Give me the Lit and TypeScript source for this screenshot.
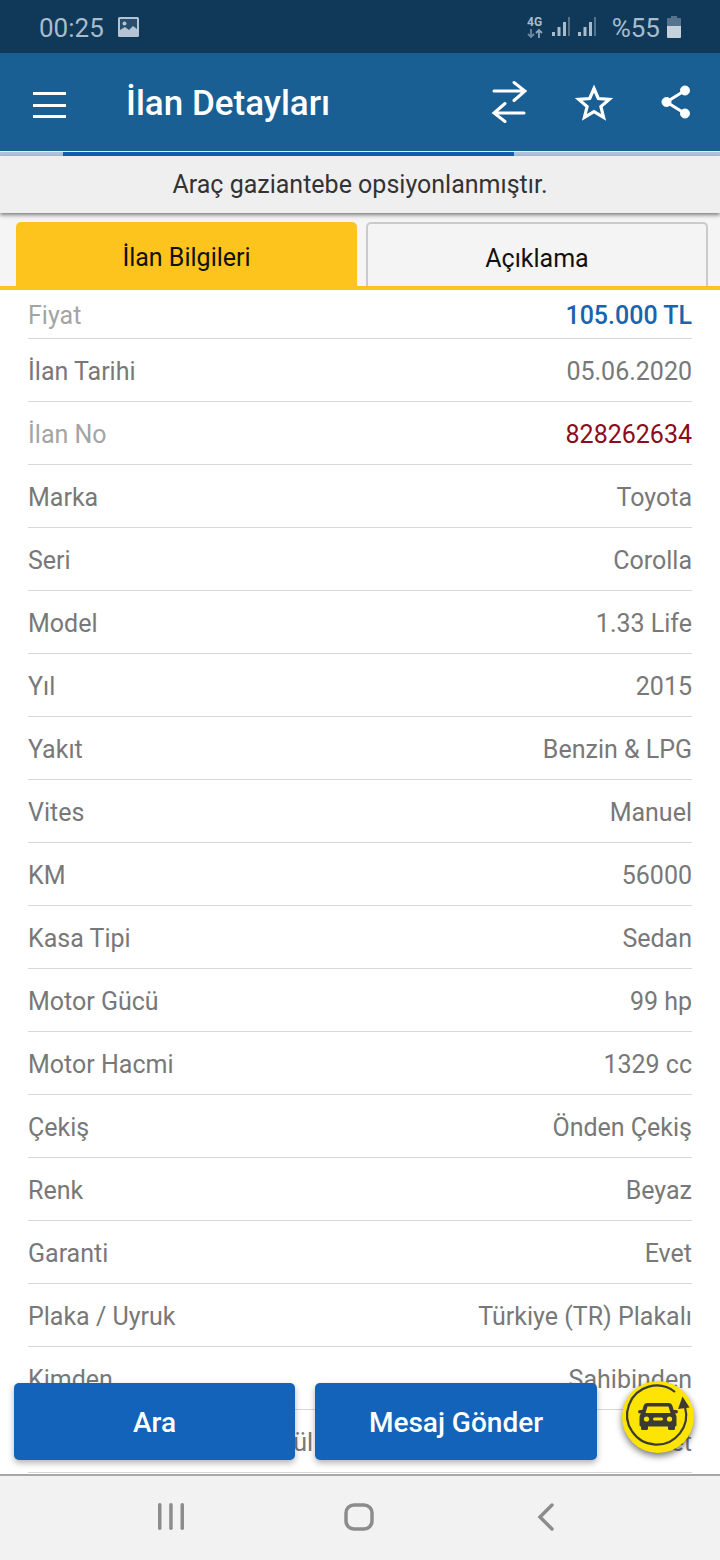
import { LitElement, css, html } from 'lit';
import { customElement } from 'lit/decorators.js';
import { classMap } from 'lit/directives/class-map.js';

interface Row {
  label: string;
  value: string;
  labelKind?: 'muted';
  valueKind?: 'price' | 'code';
}

const ROWS: Row[] = [
  { label: 'İlan Tarihi', value: '05.06.2020' },
  { label: 'İlan No', value: '828262634', labelKind: 'muted', valueKind: 'code' },
  { label: 'Marka', value: 'Toyota' },
  { label: 'Seri', value: 'Corolla' },
  { label: 'Model', value: '1.33 Life' },
  { label: 'Yıl', value: '2015' },
  { label: 'Yakıt', value: 'Benzin & LPG' },
  { label: 'Vites', value: 'Manuel' },
  { label: 'KM', value: '56000' },
  { label: 'Kasa Tipi', value: 'Sedan' },
  { label: 'Motor Gücü', value: '99 hp' },
  { label: 'Motor Hacmi', value: '1329 cc' },
  { label: 'Çekiş', value: 'Önden Çekiş' },
  { label: 'Renk', value: 'Beyaz' },
  { label: 'Garanti', value: 'Evet' },
  { label: 'Plaka / Uyruk', value: 'Türkiye (TR) Plakalı' },
  { label: 'Kimden', value: 'Sahibinden' },
  { label: 'Takas Uygun Olarak Görül', value: 'Evet' },
];

@customElement('app-root')
export class AppRoot extends LitElement {
  static override styles = css`
    :host {
      display: flex;
      flex-direction: column;
      position: relative;
      width: 720px;
      height: 1560px;
      overflow: hidden;
      background: #fff;
      font-family: Roboto, 'Liberation Sans', sans-serif;
    }
    .status {
      flex: none;
      height: 53px;
      box-sizing: border-box;
      padding: 0 39px 0 39px;
      background: #0f3859;
      color: #a9bccb;
      display: flex;
      align-items: center;
      font-size: 26px;
    }
    .status .time,
    .status .pct {
      padding-top: 2px;
    }
    .status .pic {
      margin-left: 14px;
    }
    .status .right {
      margin-left: auto;
      display: flex;
      align-items: center;
    }
    .status .bars {
      margin-left: 9px;
    }
    .status .bars + .bars {
      margin-left: 8px;
    }
    .status .pct {
      margin-left: 16px;
      margin-right: 7px;
    }
    .appbar {
      flex: none;
      height: 98px;
      box-sizing: border-box;
      padding: 0 29px 0 33px;
      background: #1a5f94;
      display: flex;
      align-items: center;
      color: #fff;
    }
    .appbar .menu {
      margin-top: 6px;
    }
    .appbar h1 {
      margin: 0 0 0 59px;
      padding-top: 2px;
      font-size: 35px;
      font-weight: 500;
      line-height: 1;
    }
    .appbar .actions {
      margin-left: auto;
      display: flex;
      align-items: center;
      gap: 48px;
    }
    .progress {
      flex: none;
      height: 5px;
      box-sizing: border-box;
      border-top: 1px solid #e4ebf2;
      background: #b0c3da;
      padding: 0 206px 0 63px;
    }
    .progress div {
      height: 100%;
      background: #1560ae;
    }
    .notice {
      flex: none;
      position: relative;
      z-index: 1;
      height: 57px;
      background: #efefef;
      box-shadow: 0 2px 4px rgba(0, 0, 0, 0.5);
      display: flex;
      align-items: center;
      justify-content: center;
      color: #333;
      font-size: 25px;
    }
    .tabs {
      flex: none;
      height: 77px;
      box-sizing: border-box;
      padding: 9px 0 0 16px;
      background: #f5f5f5;
      border-bottom: 4px solid #fdc41e;
      display: grid;
      grid-template-columns: 341px 342px;
      column-gap: 9px;
    }
    .tab {
      height: 64px;
      box-sizing: border-box;
      border-radius: 5px 5px 0 0;
      display: flex;
      align-items: center;
      justify-content: center;
      padding-top: 6px;
      color: #111;
      font-size: 25px;
    }
    .tab.on {
      background: #fdc41e;
    }
    .tab.off {
      background: #f4f4f4;
      border: 2px solid #cacaca;
      border-bottom: none;
    }
    .list {
      flex: 1;
      min-height: 0;
      overflow: hidden;
      padding: 0 28px 0 28px;
      font-size: 25px;
      color: #787878;
    }
    .row {
      height: 63px;
      box-sizing: border-box;
      padding-top: 2px;
      border-bottom: 1px solid #d8d8d8;
      display: flex;
      align-items: center;
      justify-content: space-between;
      white-space: nowrap;
    }
    .row.first {
      height: 49px;
    }
    .muted {
      color: #a4a4a4;
    }
    .price {
      color: #1a63ad;
      font-weight: 500;
    }
    .code {
      color: #8a0d1c;
    }
    .nav {
      flex: none;
      height: 86px;
      box-sizing: border-box;
      border-top: 2px solid #a8a8a8;
      background: #f2f2f2;
      display: flex;
      align-items: center;
      padding: 0 165px 3px 158px;
      justify-content: space-between;
    }
    .nav .home {
      margin-right: 4px;
    }
    .cta {
      position: absolute;
      top: 1383px;
      height: 77px;
      box-sizing: border-box;
      padding-top: 2px;
      border-radius: 5px;
      background: #1263b9;
      color: #fff;
      font-size: 28px;
      font-weight: 500;
      display: flex;
      align-items: center;
      justify-content: center;
      box-shadow: 0 3px 6px rgba(0, 0, 0, 0.3);
    }
    .call {
      left: 14px;
      width: 281px;
    }
    .message {
      left: 315px;
      width: 282px;
    }
    .fab {
      position: absolute;
      left: 622px;
      top: 1381px;
      width: 72px;
      height: 72px;
      border-radius: 50%;
      background: #fde402;
      box-shadow: 0 3px 7px rgba(0, 0, 0, 0.55);
    }
    svg {
      display: block;
      flex: none;
    }
  `;

  private renderRow(row: Row, first = false) {
    return html`
      <div class=${classMap({ row: true, first })}>
        <span class=${classMap({ muted: row.labelKind === 'muted' })}>${row.label}</span>
        <span
          class=${classMap({
            price: row.valueKind === 'price',
            code: row.valueKind === 'code',
          })}
          >${row.value}</span
        >
      </div>
    `;
  }

  private renderBars() {
    return html`
      <svg class="bars" width="18" height="21" viewBox="0 0 18 21" fill="#a9bccb">
        <rect x="0" y="16" width="3" height="4" />
        <rect x="5.500" y="11" width="3" height="9" />
        <rect x="11" y="6" width="3" height="14" />
        <rect x="16" y="1" width="2" height="19" fill="#54728c" />
      </svg>
    `;
  }

  override render() {
    return html`
      <div class="status">
        <span class="time">00:25</span>
        <svg class="pic" width="21" height="20" viewBox="0 0 21 20">
          <rect width="21" height="20" rx="1.500" fill="#b4c4d2" />
          <rect x="2" y="2" width="17" height="16" fill="#2a4f6e" />
          <path d="M2 18v-5l5-3 4 3 4-4 4 3v6z" fill="#b4c4d2" />
          <circle cx="6.500" cy="6.500" r="2" fill="#b4c4d2" />
        </svg>
        <div class="right">
          <svg width="16" height="24" viewBox="0 0 16 24">
            <text x="0" y="11" font-family="Roboto" font-size="12" font-weight="700" fill="#a9bccb">4G</text>
            <path d="M4 14v8M1 19l3 3 3-3" stroke="#6f8aa1" stroke-width="1.800" fill="none" />
            <path d="M12 23v-8M9 18l3-3 3 3" stroke="#8ea5b8" stroke-width="1.800" fill="none" />
          </svg>
          ${this.renderBars()} ${this.renderBars()}
          <span class="pct">%55</span>
          <svg width="14" height="22" viewBox="0 0 14 22">
            <path d="M4 0h6v2h3a1 1 0 0 1 1 1v7H0V3a1 1 0 0 1 1-1h3z" fill="#56738d" />
            <path d="M0 10h14v11a1 1 0 0 1-1 1H1a1 1 0 0 1-1-1z" fill="#c5d1db" />
          </svg>
        </div>
      </div>

      <div class="appbar">
        <svg class="menu" width="34" height="26" viewBox="0 0 34 26" fill="#fff">
          <rect y="0" width="33" height="3" />
          <rect y="12" width="33" height="3" />
          <rect y="23" width="33" height="3" />
        </svg>
        <h1>İlan Detayları</h1>
        <div class="actions">
          <svg width="36" height="44" viewBox="0 0 36 44" fill="none" stroke="#fff" stroke-width="3" stroke-linecap="round">
            <path d="M3 11h31M23 2.500l11 8.500-11 9.500" />
            <path d="M33 33H3M14 23.500L3 33l11 8.500" />
          </svg>
          <svg width="38" height="38" viewBox="0 0 38 38" fill="none" stroke="#fff" stroke-width="3.200">
            <path d="M19 5.500l4.300 10 11 .9-8.400 7.200 2.700 10.700-9.600-5.700-9.600 5.700 2.700-10.700-8.400-7.200 11-.9z" />
          </svg>
          <svg width="30" height="36" viewBox="0 0 30 36" fill="#fff" stroke="#fff">
            <circle cx="24" cy="6.500" r="4.500" />
            <circle cx="5.500" cy="18" r="4.500" />
            <circle cx="24" cy="29.500" r="4.500" />
            <path d="M24 6.500L5.500 18 24 29.500" fill="none" stroke-width="3" />
          </svg>
        </div>
      </div>
      <div class="progress"><div></div></div>

      <div class="notice">Araç gaziantebe opsiyonlanmıştır.</div>

      <div class="tabs">
        <div class="tab on">İlan Bilgileri</div>
        <div class="tab off">Açıklama</div>
      </div>

      <div class="list">
        ${this.renderRow({ label: 'Fiyat', value: '105.000 TL', labelKind: 'muted', valueKind: 'price' }, true)}
        ${ROWS.map((row) => this.renderRow(row))}
      </div>

      <div class="nav">
        <svg width="26" height="27" viewBox="0 0 26 27" fill="#8c8c8c">
          <rect x="0" y="0" width="3.500" height="27" rx="1.700" />
          <rect x="11.200" y="0" width="3.500" height="27" rx="1.700" />
          <rect x="22.500" y="0" width="3.500" height="27" rx="1.700" />
        </svg>
        <svg class="home" width="30" height="28" viewBox="0 0 30 28" fill="none" stroke="#8c8c8c" stroke-width="3.500">
          <rect x="2" y="2" width="26" height="24" rx="8" />
        </svg>
        <svg width="18" height="28" viewBox="0 0 18 28" fill="none" stroke="#8c8c8c" stroke-width="3.500" stroke-linecap="round">
          <path d="M15 2L3 14l12 12" />
        </svg>
      </div>

      <div class="cta call">Ara</div>
      <div class="cta message">Mesaj Gönder</div>
      <div class="fab">
        <svg width="72" height="72" viewBox="0 0 72 72">
          <path d="M63 26A29.500 29.500 0 1 1 53 11" fill="none" stroke="#3b3b32" stroke-width="2.200" />
          <path d="M60.500 15.500l7 11-11.500 1.500z" fill="#3b3b32" />
          <path
            fill="#3b3b32"
            d="M25 22h22a3.500 3.500 0 0 1 3.300 2.500l1.400 4.500h2.500a1.600 1.600 0 0 1 0 3.500h-1.400a5 5 0 0 1 1.700 3.500v8a1.500 1.500 0 0 1-1.500 1.500v2a1.500 1.500 0 0 1-1.500 1.500h-4a1.500 1.500 0 0 1-1.500-1.500v-2H26v2a1.500 1.500 0 0 1-1.500 1.500h-4a1.500 1.500 0 0 1-1.500-1.500v-2a1.500 1.500 0 0 1-1.500-1.500v-8a5 5 0 0 1 1.700-3.500h-1.400a1.600 1.600 0 0 1 0-3.500h2.500l1.400-4.500A3.500 3.500 0 0 1 25 22z"
          />
          <path d="M25.500 25.500h21l2 6.500h-25z" fill="#fde402" />
          <circle cx="24.500" cy="38" r="2.600" fill="#fde402" />
          <circle cx="47.500" cy="38" r="2.600" fill="#fde402" />
          <rect x="31" y="36.500" width="10" height="3" rx="1.500" fill="#fde402" />
        </svg>
      </div>
    `;
  }
}
